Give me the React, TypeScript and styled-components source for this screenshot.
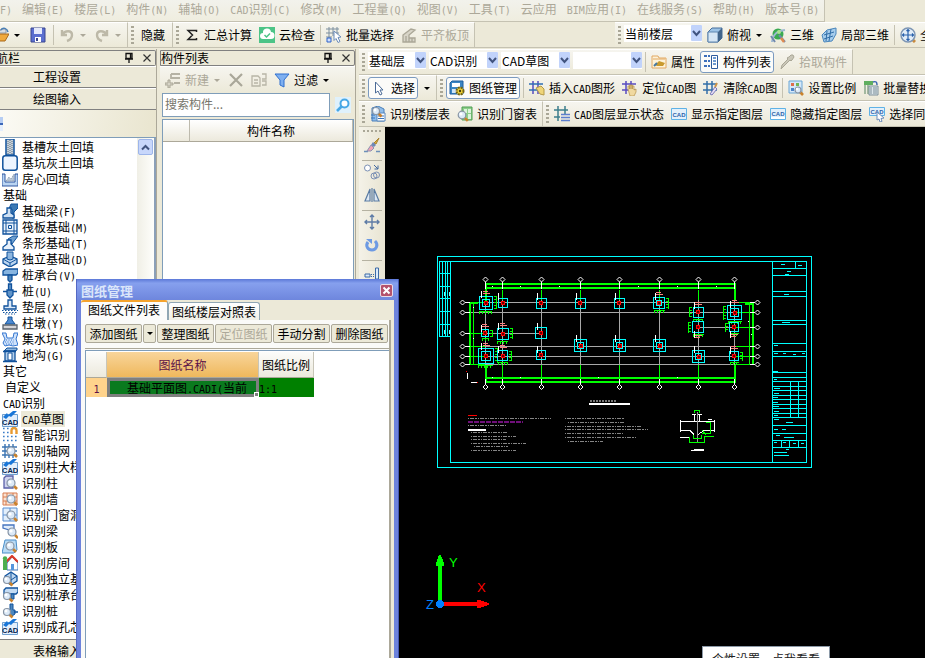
import React from "react";
import styled, { createGlobalStyle, css } from "styled-components";

const Global = createGlobalStyle`
  * { box-sizing: border-box; }
  body { margin: 0; background: #ece9d8; overflow: hidden; }
  body, button, input, select, table {
    font-family: "Noto Sans CJK SC", sans-serif;
    font-size: 12px;
    line-height: 16px;
    color: #000;
  }
  button { border: 0; background: none; padding: 0; margin: 0; white-space: nowrap; }
`;

/* ---------- text with half-width latin runs ---------- */
const Latin = styled.span`
  font-family: "DejaVu Sans Mono", monospace;
  font-size: 10px;
  line-height: 12px;
  white-space: pre;
`;
const Txt = ({ children }: { children: string }) => (
  <span>
    {children.split(/([\x20-\x7e]+)/).map((s, i) => (i % 2 ? <Latin key={i}>{s}</Latin> : s))}
  </span>
);

/* ---------- icons ---------- */
const B = "#10529c";
const L = "#b9d4f2";
const Lens = ({ x = 9, y = 8, r = 4 }) => (
  <>
    <path d={`M${x + r - 1} ${y + r - 1}l3 3`} stroke="#c9822c" strokeWidth="2.6" />
    <circle cx={x} cy={y} r={r} fill="#dceaf8" stroke="#8794a4" strokeWidth="1.2" />
    <circle cx={x - 1} cy={y - 1} r={r / 2.5} fill="#fff" />
  </>
);
const CadMark = (
  <>
    <path d="M.5 3.500h15v12H.5z" fill="#e4effb" stroke="#6f9fd0" />
    <path d="M1 6l4-4 1 2 5-4h4l-6 6-2-1-3 3z" fill="#1976d8" />
    <text x="0" y="14" fontSize="7.500" fontWeight="bold" fontFamily="Liberation Sans" fill="#08264f">CAD</text>
  </>
);
const Hash = ({ c = "#2f6fb4", c2 = c }) => (
  <>
    <path d="M4 1v13M9 1v13" stroke={c} strokeWidth="1.5" />
    <path d="M0 4h14M0 10h14" stroke={c2} strokeWidth="1.5" />
  </>
);
const CadBox = ({ y = 11 }) => (
  <>
    <path d="M.5 2.5h15v11H.5z" fill="#e3f0fb" stroke="#5fb2e6" />
    <text x="1.5" y={y} fontSize="6" fontWeight="bold" fontFamily="Liberation Sans" fill="#2c62a8">CAD</text>
  </>
);
const icons: Record<string, React.ReactNode> = {
  open: <><path d="M1 4h6l1-2h5v4H1z" fill="#d8dde2" stroke="#8c98a6" /><path d="M0 14l4-7h12l-4 7z" fill="#f0a93c" stroke="#a8691a" /><path d="M8 3c2-3 6-2 7 2" fill="none" stroke="#4b7fb5" strokeWidth="1.500" /></>,
  save: <><path d="M1 1h14v14H1z" fill="#5b6fd0" stroke="#3a478f" /><path d="M4 1h8v6H4z" fill="#e4e9fb" /><path d="M5 10h6v5H5z" fill="#fff" /><path d="M6 11h2v3H6z" fill="#3a478f" /></>,
  undo: <><path d="M3 3v5h5M3 8c3-5 10-5 10 0 0 3-2 5-5 6" fill="none" stroke="#bdb9a8" strokeWidth="2.4" /></>,
  redo: <><path d="M13 3v5H8M13 8C10 3 3 3 3 8c0 3 2 5 5 6" fill="none" stroke="#bdb9a8" strokeWidth="2.4" /></>,
  sigma: <path d="M12.500 5V3.500H4L8.500 8 4 12.500h8.500V11" fill="none" stroke="#222" strokeWidth="1.5" />,
  cloud: <><path d="M0 0h16v16H0z" fill="#4cc487" /><path d="M4 12a3 3 0 010-6 4 4 0 018-1 3.500 3.500 0 010 7z" fill="#fff" /><path d="M5.500 8l2 2 3.500-3.500" fill="none" stroke="#4cc487" strokeWidth="1.500" /></>,
  batch: <><path d="M0 2h13M0 6h13M0 10h6M3 0v12M7 0v9M11 0v9" stroke="#7d8f9f" /><path d="M1 11h4v4H1z" fill="#cfe0ff" stroke="#2e62c8" /><path d="M8 4l7 6-3 .5 2 4-2 1-2-4-2 2z" fill="#fff" stroke="#6b8cba" /></>,
  flush: <path d="M2 8l8-6 4 1-6 5v3h6v4H2zM5 9v6M8 9v6M11 11v4" fill="#d8d5c8" stroke="#aaa797" strokeWidth="1.300" />,
  cube: <><path d="M1 5l4-4h10v10l-4 4H1z" fill="#9cc3e6" stroke="#476f9c" /><path d="M1 5h10v10H1z" fill="#d6e6f4" stroke="#5e86b0" /><path d="M11 5l4-4v10l-4 4z" fill="#42658a" /></>,
  orbit: <><circle cx="8" cy="7" r="5.500" fill="#3aaa52" /><path d="M2 15c1-8 5-11 13-12" fill="none" stroke="#9db7d3" strokeWidth="2" /><path d="M1 9l4 6M9 8l6 7" stroke="#7089ad" strokeWidth="2" /><circle cx="9" cy="5" r="2" fill="#a9e38f" /><path d="M11 11l3 4" stroke="#df8a50" strokeWidth="2.500" /></>,
  local3d: <><path d="M1 8l5-5 9-2v6l-4 7-8 1z" fill="#a7cdec" stroke="#4a86bc" /><path d="M3 8l10-3M3 12l9-3M6 4l-1 10M10 2l-2 12" stroke="#326fa8" /></>,
  pan: <><path d="M12 12l3 3" stroke="#c98a3d" strokeWidth="3" /><circle cx="8" cy="8" r="7" fill="#e2edf8" stroke="#7e96b4" strokeWidth="1.500" /><path d="M8 2.500v11M2.500 8h11M6.500 4L8 2.500 9.500 4M6.500 12L8 13.500 9.500 12M4 6.500L2.500 8 4 9.500M12 6.500L13.500 8 12 9.500" fill="none" stroke="#2a62ac" strokeWidth="1.200" /></>,
  props: <><path d="M1 2h6l1 2h7v10H1z" fill="#fdf2d8" stroke="#e2a862" /><path d="M2 5h12" stroke="#e2a862" /><path d="M4 11l4-4 6 2-2 3H6z" fill="#c99a2e" /><path d="M3 12l3-3" stroke="#47789f" strokeWidth="2" /></>,
  complist: <><path d="M1 2h3M1 7h3M1 12h3M5 2h2M5 7h2M5 12h2" stroke="#3d6fbb" strokeWidth="2" /><path d="M8.500 1.500h6v13h-6z" fill="#fff" stroke="#2d5a9c" /><path d="M10 4h3M10 7h3M10 10h3" stroke="#3f79c0" strokeWidth="1.500" /></>,
  picker: <path d="M2 15l1-4 6-6-1-1 2-1 2-2 2 0 1 2-2 3-1 1-1-1-6 6z" fill="#c9c6b8" stroke="#aaa797" />,
  cursor: <path d="M4.500 2v11l2.500-2 2 4 2-1-2-4h3z" fill="#fff" stroke="#4a6a96" />,
  manage: <><path d="M1 3l2-2h11v13H1z" fill="#3b86c4" stroke="#1e5e9e" /><path d="M3 3h8v4H3z" fill="#fff" /><path d="M3 9h5v4H3z" fill="#cfe5f8" /><circle cx="11" cy="11" r="3.500" fill="#f2d53a" stroke="#74620e" strokeWidth="2" strokeDasharray="1.800 1" /><circle cx="11" cy="11" r="1.200" fill="#443c10" /></>,
  insertCad: <><Hash c="#5a4cc0" c2="#2f6fb4" /><path d="M7 8l5-2 3 3v6l-4-1z" fill="#efd579" stroke="#b49a49" /></>,
  locateCad: <><Hash c="#5a4cc0" /><path d="M6 9V6h1.500v3V5H9v4V5h1.500v4V6H12v4l2-1v3l-2 4H8z" fill="#f0d9a0" stroke="#bb9a55" strokeWidth=".8" /></>,
  clearCad: <><Hash c="#336fa8" /><path d="M7 14l5-7 2 2-5 6z" fill="#e7dff5" stroke="#7a79b9" /><path d="M12 7l2-4" stroke="#cc9348" strokeWidth="2" /></>,
  ratio: <><path d="M1 1h13v12H1z" fill="#d5e8f8" stroke="#6aa6d6" /><path d="M3 3h3v3H3z" fill="#e06d4c" /><path d="M8 3h3v3H8z" fill="#74b655" /><path d="M3 8h3v3H3z" fill="#4d83c8" /><Lens x={10} y={10} r={3} /></>,
  replace: <><path d="M1 1h9v4H1z" fill="#5fae5f" /><path d="M2 5v9M5 5v9" stroke="#8aa78a" strokeWidth="1.500" /><path d="M6 6h9v9H6z" fill="#dce6ea" stroke="#7d8f99" /><path d="M8 7v7M11 7v7M13 7v7" stroke="#7d8f99" /><path d="M10 2c3-1 4 0 4 3" fill="none" stroke="#3a66b0" strokeWidth="1.500" /></>,
  floorTable: <><path d="M2 2l6-2 6 3v12H2z" fill="#8fbdeb" stroke="#4a7fb8" /><path d="M7 7h8v8H7z" fill="#fff" stroke="#5686bd" /><path d="M8 10h6M8 12.500h6M1 9h4M1 12h4" stroke="#3a75bb" /><Lens x={6} y={5} r={3.500} /></>,
  doorTable: <><path d="M5 1h10v13H5z" fill="#8ccf8a" stroke="#4f9d53" /><path d="M7 3h3v4H7zM11 3h3v4h-3zM11 8h3v5h-3z" fill="#ddf3dc" /><Lens x={5} y={9} r={3.800} /></>,
  layerState: <><path d="M4 0v15M11 0v8M0 4h14M0 11h6" stroke="#3c7e8c" strokeWidth="1.500" /><path d="M7 8.500h9M7 11.500h9M7 14.500h9" stroke="#5d7fcf" strokeWidth="1.500" /></>,
  cadShow: <CadBox />,
  cadHide: <><CadBox y={10} /><path d="M1 11h14v2H1z" fill="#fff" /></>,
  cadPick: <><path d="M.5 1.500h15v8H.5z" fill="#e3f0fb" stroke="#5fb2e6" /><text x="1.500" y="8" fontSize="6" fontWeight="bold" fontFamily="Liberation Sans" fill="#2c62a8">CAD</text><path d="M8 6l7 6-3 .5 1 3-2 .5-1-3-2 1z" fill="#fff" stroke="#6d8cba" /></>,
  newItem: <><path d="M6 2h9M6 6h9M9 11h6M6 2v5" stroke="#b5b2a4" strokeWidth="1.800" fill="none" /><path d="M3 8h2v3h3v2H5v3H3v-3H0v-2h3z" fill="#d6d3c6" stroke="#aaa797" /></>,
  del: <path d="M2 2l12 12M14 2L2 14" stroke="#a9a799" strokeWidth="2.200" />,
  copy: <path d="M1 4h6l2 2v8H1zM3 8h4M3 11h4M11 2h4v5h-4M11 9h4v4h-4" fill="none" stroke="#b8b5a7" strokeWidth="1.300" />,
  filter: <path d="M1 2h14L10 8v7l-4-2V8z" fill="#7fb0f0" stroke="#2f6fce" />,
  search: <><path d="M0 0h16v16H0z" fill="#dff1fc" /><circle cx="9.500" cy="6.500" r="4" fill="#fff" stroke="#48a8e6" strokeWidth="2" /><path d="M6.500 9.500L2 14" stroke="#48a8e6" strokeWidth="2.600" /></>,
  pin: <path d="M5 3.500h6v5H5zM9.500 3v6M4 9h8M8 9v4" fill="none" stroke="#111" strokeWidth="1.300" />,
  close: <path d="M4.500 4.500l7 7M11.500 4.500l-7 7" stroke="#333" strokeWidth="1.200" />,
  brush: <><path d="M0 14.500h4M12 14.500h4" stroke="#6c8fb9" strokeWidth="1.500" /><path d="M15 1l-5 5 2 1z" fill="#dfb23d" stroke="#a9822b" /><path d="M9 5l3 3-2 2-3-2z" fill="#6d87b8" /><path d="M7 8l3 3-3 3H3z" fill="#f1a3b5" stroke="#8c92b3" /></>,
  copyShape: <><circle cx="3.500" cy="4" r="3" fill="#fff" stroke="#7b90b4" /><circle cx="10" cy="12" r="3" fill="none" stroke="#7b90b4" /><circle cx="12.500" cy="11" r="3" fill="none" stroke="#7b90b4" /><path d="M10 1l4 4M14 1.500V5h-3.500" fill="none" stroke="#41699f" /></>,
  mirror: <path d="M6 2v12H1zM10 2v12h5zM8 1v14" fill="#dfe9f3" stroke="#5b7ca3" strokeWidth="1.200" />,
  move: <path d="M8 1v14M1 8h14M6 3l2-2 2 2M6 13l2 2 2-2M3 6L1 8l2 2M13 6l2 2-2 2" fill="none" stroke="#5d7ba6" strokeWidth="1.400" />,
  rotate: <><path d="M4 5c-3 4 0 8 4 8s7-5 3-9" fill="none" stroke="#6d9ae3" strokeWidth="3" /><path d="M2 2h6v5z" fill="#6d9ae3" /></>,
  align: <><path d="M1 10h5v3H1z" fill="#dcebfa" stroke="#3c6aa6" /><path d="M11.500 4h3v11h-3z" fill="#dcebfa" stroke="#3c6aa6" /><path d="M7 10.500h4M7 12.500h4" stroke="#3c6aa6" strokeDasharray="1 1" /></>,
  trench: <><path d="M4 0h8v16H4z" fill="#c8d3dc" stroke={B} strokeWidth="1.500" /><path d="M6 2v13M8 1v13M10 2v13" stroke="#5c6d7c" strokeDasharray="1 1" /></>,
  pit: <rect x=".8" y=".8" width="14.400" height="14.400" rx="2.500" fill="#edf5ff" stroke={B} strokeWidth="1.500" />,
  room: <><path d="M0 3h3v8h10V3h3v12H0z" fill={L} stroke="#2f57a0" /><path d="M4 10l3-4 2 2 3-5v7z" fill="#b9c7d6" stroke="#8a9bad" strokeDasharray="1 1" /></>,
  beam: <><path d="M9 1h7v4l-4 4v6h-2V6L6 8z" fill="#3b79b4" stroke={B} /><path d="M5 5h4v5l3 2v3H1v-3l4-2z" fill="#cfe1f4" stroke={B} strokeWidth="1.300" /></>,
  raft: <><path d="M1 1h14v14H1z" fill="#e8f1fb" stroke={B} strokeWidth="1.300" /><path d="M4 1v14M12 1v14M1 4h14M1 12h14M6.500 6.500h3v3h-3z" fill="none" stroke={B} /></>,
  strip: <><path d="M6 4l5-3h5L10 9l-1-1z" fill="#6d9fd0" stroke={B} /><path d="M5 5h4v4l3 3v3H1v-3l4-3z" fill="#e8f1fb" stroke={B} strokeWidth="1.300" /></>,
  isolated: <><path d="M1 8l7-3 7 3v4l-7 4-7-4z" fill="#bcd6f0" stroke={B} strokeWidth="1.300" /><path d="M1 8l7 4 7-4M8 12v3" fill="none" stroke={B} /><path d="M5 1h6v7l-3 1-3-1z" fill="#8db6df" stroke={B} /></>,
  cap: <><path d="M1 4l3-2h12v4l-2 2H1z" fill="#86b4e0" stroke={B} strokeWidth="1.300" /><path d="M6 8h4v5l-2 2-2-2z" fill="#4c86bd" stroke={B} strokeWidth="1.300" /></>,
  pile: <><path d="M6.500 1h3v6h-3zM5 7h6v5l-3 3-3-3z" fill="#5f93c8" stroke={B} strokeWidth="1.300" /><path d="M1 8.500h4M11 8.500h4" stroke={B} strokeWidth="1.500" /></>,
  cushion: <><path d="M6 1h4v6h4v3H2V7h4z" fill="#dbe9f8" stroke={B} strokeWidth="1.300" /><path d="M0 11.500h16M1 13.500h15M3 15h10" stroke={B} strokeDasharray="1.500 1.500" /></>,
  pier: <><path d="M6 2h4v3l3 4H3l3-4z" fill="#4d8ad2" stroke={B} /><path d="M1 10h14v4H1z" fill="#d4d4d8" stroke="#58616c" strokeWidth="1.300" /></>,
  sump: <><path d="M0 2h4l1 5h6l1-5h4l-2 6 2 6-5 1-4-1-4 1-2-3 2-4z" fill="#cfe2fa" stroke="#3476d0" /><path d="M3 11h10M4 13h8M4 9h8" stroke="#3476d0" strokeDasharray="1 1.500" /></>,
  ditch: <><path d="M2 4l3-3h10v2l-2 1z" fill="#8db6df" stroke={B} /><path d="M3 4h10v10H3z" fill="#b5d0ec" stroke={B} strokeWidth="1.300" /><path d="M6 6h4v7H6z" fill="#fff" stroke={B} /><path d="M1 14.500h14M1 4.500h13" stroke={B} strokeWidth="1.500" /></>,
  cad: CadMark,
  smart: <><path d="M1 1.500h6M1 5.500h6M1 9.500h14M1 13.500h14" stroke="#3a7cc8" strokeWidth="1.600" strokeDasharray="1.600 2.400" /><path d="M9.500 7V3.500a2.500 2.500 0 015 0V7" fill="none" stroke="#e79a32" strokeWidth="2.400" /></>,
  axis: <><path d="M3 1v14M7 1v14M11 1v14M0 4h15M0 8h15M0 12h15" stroke="#3b74b2" strokeWidth="1.400" /><Lens /></>,
  column: <><path d="M2 3l2-2h7v12H2z" fill="#cfd2ee" stroke="#5960a8" strokeWidth="1.300" /><Lens /></>,
  wall: <><path d="M1 2h14v12H1zM1 6h14M1 10h14M5 2v4M11 2v4M8 6v4M4 10v4" fill="#fbe3d2" stroke="#d77d50" /><Lens /></>,
  door: <><path d="M1 1h14v13H1zM8 1v13M1 8h14" fill="#e2effc" stroke="#5b8fd2" /><Lens /></>,
  recBeam: <><path d="M1 2h11v7l-5 2v-4L1 5z" fill="#e1edfb" stroke="#4675c0" strokeWidth="1.300" /><Lens x={10} y={9} /></>,
  slab: <><path d="M3 1h11l1 10-3 3H0z" fill="#b8dbf6" stroke="#4a8dc8" /><Lens x={8} y={7} /></>,
  house: <><path d="M5 8l5-6 6 6v7H5z" fill="#fff" stroke="#3f74b6" /><path d="M3 8l7-7 6 6" fill="none" stroke="#d83a28" strokeWidth="2.200" /><path d="M1 5h4v10H1z" fill="#4cae4f" /><circle cx="3" cy="3.500" r="2.200" fill="#4cae4f" /><path d="M9 9h3v6H9z" fill="#5596dd" /></>,
  recIso: <><path d="M3 5l6-4 6 4v5l-6 4-6-4z" fill="#bcd6f0" stroke={B} strokeWidth="1.300" /><path d="M9 1v8l6-4M9 9v5" fill="none" stroke={B} /><Lens x={5} y={9} r={3.500} /></>,
  recCap: <><path d="M2 3l2-2h12v4l-2 2H2z" fill="#c4dcf4" stroke={B} strokeWidth="1.300" /><path d="M9 7h3v5H9z" fill="#4c86bd" stroke={B} /><Lens x={5} y={9} r={3.500} /></>,
  recPile: <><path d="M8 1h3v6h2v4l-3 2-3-2V7h1z" fill="#4c86bd" stroke={B} /><path d="M12 9h4" stroke={B} strokeWidth="1.500" /><Lens x={5} y={9} r={3.500} /></>,
};
const Svg = styled.svg`
  width: 16px;
  height: 16px;
  flex: none;
  display: block;
`;
const Icon = ({ name }: { name: string }) => (
  <Svg viewBox="0 0 16 16" fill="none" aria-hidden="true">{icons[name]}</Svg>
);
const Caret = styled.i<{ $dim?: boolean }>`
  flex: none;
  margin: 0 1px;
  border: 3px solid transparent;
  border-top-color: ${(p) => (p.$dim ? "#aca899" : "#000")};
  border-bottom-width: 0;
`;

/* ---------- toolbars ---------- */
const Page = styled.div`
  display: flex;
  flex-direction: column;
  height: 100vh;
  overflow: hidden;
`;
const MenuBar = styled.nav`
  display: flex;
  align-self: flex-start;
  height: 22px;
  padding: 0 0 4px;
  background: linear-gradient(#f2f2ec, #efeddf);
  border-right: 1px solid #c5c2b2;
  border-bottom: 1px solid #c5c2b2;
`;
const MenuItem = styled.button`
  color: #aca899;
  padding: 0 5px;
  &:first-child { padding-left: 0; }
`;
const Strip = styled.div`
  display: flex;
  flex: none;
  height: 26px;
  overflow: hidden;
  border-bottom: 1px solid #c5c2b2;
`;
const Band = styled.div<{ $open?: boolean }>`
  display: flex;
  align-items: center;
  gap: 1px;
  flex: none;
  padding-right: 2px;
  background: linear-gradient(#f6f5ef, #ece9d8);
  border-top: 1px solid #fff;
  border-right: ${(p) => (p.$open ? 0 : 1)}px solid #c5c2b2;
`;
/* runs past the left edge of the window */
const FileBand = styled(Band)`
  margin-left: -10px;
`;
/* runs past the right edge of the window */
const ViewBand = styled(Band)`
  margin-right: -24px;
`;
const ListTools = styled(Band)`
  height: 27px;
  padding-left: 2px;
`;
const Spacer = styled.div`flex: 1;`;
const Grip = styled.span`
  width: 3px;
  height: 19px;
  margin: 0 1px 0 3px;
  flex: none;
  background: repeating-linear-gradient(#aaa797 0 2px, transparent 2px 4px);
`;
const Rule = styled.span`
  width: 1px;
  height: 20px;
  margin: 0 1px;
  flex: none;
  background: #c5c2b2;
`;
const ToolButton = styled.button<{ $on?: boolean; $wide?: boolean }>`
  display: flex;
  align-items: center;
  gap: 4px;
  height: 22px;
  flex: none;
  padding: 0 ${(p) => (p.$wide ? 5 : 3)}px;
  &:disabled { color: #aca899; }
  ${(p) => p.$on && css`
    padding: 0 2px;
    background: #fbfbf9;
    border: 1px solid #7b9ac0;
    border-radius: 3px;
    margin: 0 1px;
  `}
`;
const Tool = ({ icon, text, on, off, caret }: { icon?: string; text?: string; on?: boolean; off?: boolean; caret?: boolean }) => (
  <ToolButton $on={on} $wide={!icon || icon === "save"} disabled={off} aria-label={text ?? icon}>
    {icon && <Icon name={icon} />}
    {text && <Txt>{text}</Txt>}
    {caret && <Caret $dim={off} />}
  </ToolButton>
);
const Combo = styled.select<{ $w: number }>`
  appearance: none;
  width: ${(p) => p.$w}px;
  height: 17px;
  margin: 0 1px 4px;
  padding: 0 12px 0 1px;
  border: 0;
  border-radius: 0;
  line-height: 15px;
  outline: none;
  background:
    url("data:image/svg+xml,%3Csvg xmlns='http://www.w3.org/2000/svg' width='11' height='16'%3E%3Crect width='11' height='16' rx='1' fill='%23c1d3fb'/%3E%3Cpath d='M2 6l3.500 4L9 6' fill='none' stroke='%2341547f' stroke-width='2'/%3E%3C/svg%3E")
    right center no-repeat #fff;
`;
const ToolRows = styled.div`
  display: flex;
  flex-direction: column;
  flex: none;
`;

/* ---------- panes ---------- */
const Main = styled.div`
  display: flex;
  flex: 1;
  min-height: 0;
  padding-top: 1px;
  gap: 3px;
`;
const Pane = styled.section<{ $w: number }>`
  display: flex;
  flex-direction: column;
  flex: none;
  width: ${(p) => p.$w}px;
  padding-top: 1px;
  border-right: 1px solid #aca899;
`;
const PaneHead = styled.header<{ $cut?: boolean }>`
  display: flex;
  align-items: center;
  flex: none;
  height: 16px;
  border: 1px solid #808080;
  border-left: ${(p) => (p.$cut ? 0 : 1)}px solid #808080;
  border-radius: 0 2px 2px 0;
  text-indent: ${(p) => (p.$cut ? -4 : 0)}px;
  overflow: hidden;
  gap: 2px;
  h2 { flex: 1; margin: 0; font-size: 12px; font-weight: 400; line-height: 14px; }
`;
const NavButton = styled.button`
  height: 22px;
  flex: none;
  padding-left: 33px;
  text-align: left;
  border-top: 1px solid #fff;
  border-bottom: 1px solid #808080;
`;
const NavFoot = styled(NavButton)`
  height: 19px;
  padding-top: 3px;
  border-top: 1px solid #808080;
  border-bottom: 0;
`;
const NavTools = styled.div`
  display: flex;
  align-items: center;
  height: 28px;
  flex: none;
  background: linear-gradient(100deg, #fbfaf4, #e9e5cf);
  border-bottom: 1px solid #7f9db9;
`;
const NavMark = styled.span`
  width: 3px;
  height: 14px;
  background: linear-gradient(#b6cdf3 45%, #3a67b8 45% 60%, #e4eefc 60%);
`;
const TreeBox = styled.div`
  display: flex;
  flex: 1;
  min-height: 0;
  background: #fff;
  border-right: 2px solid #8ba0b8;
`;
const Tree = styled.ul`
  flex: 1;
  list-style: none;
  margin: 0;
  padding: 1px 0 0;
  overflow: hidden;
  li { height: 16px; }
`;
const Leaf = styled.button<{ $on?: boolean; $indent: number }>`
  display: flex;
  align-items: center;
  gap: 3px;
  height: 16px;
  padding-left: ${(p) => p.$indent}px;
  > span {
    height: 16px;
    padding: 0 1px;
    background: ${(p) => (p.$on ? "#ece9d8" : "none")};
  }
`;
const ScrollTrack = styled.div`
  width: 17px;
  background: linear-gradient(90deg, #f0efe6, #fefefb);
`;
const ScrollUp = styled.button`
  display: grid;
  place-items: center;
  width: 15px;
  height: 16px;
  margin: 1px;
  border: 1px solid #9db5ea;
  border-radius: 2px;
  background: #c8d7fb;
`;
const SearchRow = styled.div`
  display: flex;
  align-items: center;
  gap: 5px;
  flex: none;
  height: 24px;
  padding: 0 4px 0 2px;
`;
const SearchBox = styled.input`
  flex: 1;
  min-width: 0;
  height: 24px;
  padding: 0 2px 4px;
  border: 1px solid #7f9db9;
  background: #fff;
  &::placeholder { color: #77756b; opacity: 1; }
`;
const ListBox = styled.div`
  flex: 1;
  margin: 2px 1px 0 2px;
  background: #fff;
  border: 1px solid #7f9db9;
`;
const Grid = styled.table`
  border-collapse: separate;
  border-spacing: 0;
  table-layout: fixed;
`;
const CompGrid = styled(Grid)`
  width: 100%;
  th {
    height: 22px;
    padding: 0;
    font-weight: 400;
    background: linear-gradient(#fff, #ece9dc);
    border-right: 1px solid #bdbaad;
    border-bottom: 1px solid #aca899;
  }
  th:first-child { width: 27px; }
`;
const Right = styled.main`
  display: flex;
  flex-direction: column;
  flex: 1;
  min-width: 0;
`;
const Work = styled.div`
  display: flex;
  flex: 1;
  min-height: 0;
`;
const SideTools = styled.div`
  display: flex;
  flex-direction: column;
  align-items: center;
  width: 26px;
  flex: none;
  padding-top: 3px;
  background: linear-gradient(90deg, #f4f2e8, #e8e4d2);
  button { margin-bottom: 7px; }
`;
const SideGrip = styled.span`
  width: 18px;
  height: 2px;
  margin-bottom: 5px;
  background: repeating-linear-gradient(90deg, #aaa797 0 2px, transparent 2px 4px);
`;
const SideRule = styled.span`
  width: 20px;
  height: 1px;
  margin-bottom: 3px;
  background: #b5b2a2;
`;
const Canvas = styled.div`
  position: relative;
  flex: 1;
  min-width: 0;
  background: #000;
  overflow: hidden;
`;
const Drawing = styled.svg`
  display: block;
  width: 100%;
  height: 100%;
`;
const Tip = styled.div`
  position: absolute;
  right: 95px;
  bottom: 0;
  height: 12px;
  padding: 4px 9px 0;
  overflow: hidden;
  background: #fff;
  border: 1px solid #8d9aa8;
  border-bottom: 0;
  color: #222;
`;

/* ---------- drawing manager window ---------- */
const Dialog = styled.section`
  position: absolute;
  left: 76px;
  top: 279px;
  bottom: 0;
  width: 323px;
  display: flex;
  flex-direction: column;
  padding: 0 4px;
  background: #6d83dc;
  border-left: 1px solid #5468c4;
  border-right: 1px solid #4356b0;
`;
const DialogTitle = styled.header`
  display: flex;
  align-items: center;
  justify-content: space-between;
  height: 21px;
  flex: none;
  margin: 0 -4px;
  padding: 2px 5px 0 4px;
  background: linear-gradient(#5c78d8, #86a0ee 20%, #6e86dd);
  h1 { margin: 0; font-size: 13px; line-height: 18px; color: #dbe6fa; }
`;
const CloseButton = styled.button`
  display: grid;
  place-items: center;
  width: 13px;
  height: 13px;
  background: #b4526c;
  border: 1px solid #e8dbe8;
  border-radius: 2px;
`;
const DialogBody = styled.div`
  display: flex;
  flex-direction: column;
  flex: 1;
  min-height: 0;
  padding-right: 3px;
  background: #ece9d8;
`;
const Tabs = styled.div`
  display: flex;
  align-items: flex-end;
  height: 20px;
  flex: none;
`;
const Tab = styled.button<{ $on?: boolean }>`
  height: ${(p) => (p.$on ? 20 : 18)}px;
  padding: ${(p) => (p.$on ? "0 7px 2px" : "0 3px")};
  background: ${(p) => (p.$on ? "#fcfcfb" : "linear-gradient(#fff, #f0efe6)")};
  border: 1px solid #91a7b4;
  border-bottom: 0;
  border-radius: 3px 3px 0 0;
  ${(p) => p.$on && css`border-left: 0; border-top: 2px solid #f5a32c;`}
`;
const TabPage = styled.div`
  display: flex;
  flex-direction: column;
  flex: 1;
  min-height: 0;
  padding: 4px 0 0 4px;
  background: #fafaf8;
  border-right: 2px solid #aca899;
`;
const ButtonRow = styled.div`
  display: flex;
  gap: 1px;
  height: 25px;
  flex: none;
  margin-bottom: 1px;
  border-bottom: 1px solid #aca899;
`;
const PushButton = styled.button<{ $slim?: boolean }>`
  display: grid;
  place-items: center;
  width: ${(p) => (p.$slim ? 13 : 57)}px;
  height: 19px;
  background: #ece9d8;
  border: 1px solid #aca899;
  border-radius: 2px;
  &:disabled { color: #aca899; }
`;
const SheetBox = styled.div`
  flex: 1;
  padding-top: 1px;
  background: #fff;
  border-left: 1px solid #7f9db9;
  border-top: 1px solid #7f9db9;
`;
const SheetGrid = styled(Grid)`
  width: 228px;
  th, td { padding: 0; font-weight: 400; overflow: hidden; white-space: nowrap; }
  thead th {
    height: 26px;
    background: linear-gradient(#fcfcfa, #ece9dc);
    border-right: 1px solid #c8c5b8;
    border-bottom: 1px solid #aca899;
  }
  thead th:nth-child(2) { background: linear-gradient(#f8d59b, #efb85c); color: #5c1248; }
  tbody th { background: #ffd38c; color: #5c1248; }
  tbody td { background: #008000; }
`;
const NameCell = styled.div`
  position: relative;
  height: 19px;
  padding-left: 8px;
  border: 3px solid #7f7f7f;
  line-height: 13px;
  text-align: center;
  background: #0a7a1e;
`;
const Handle = styled.i`
  position: absolute;
  right: -3px;
  bottom: -3px;
  width: 5px;
  height: 5px;
  background: #7f7f7f;
  border: 1px solid #fff;
`;

/* ---------- data ---------- */
const menus = ["F)", "编辑(E)", "楼层(L)", "构件(N)", "辅轴(O)", "CAD识别(C)", "修改(M)", "工程量(Q)", "视图(V)", "工具(T)", "云应用", "BIM应用(I)", "在线服务(S)", "帮助(H)", "版本号(B)"];
const tree: [string, string?][] = [
  ["基槽灰土回填", "trench"], ["基坑灰土回填", "pit"], ["房心回填", "room"], ["基础"],
  ["基础梁(F)", "beam"], ["筏板基础(M)", "raft"], ["条形基础(T)", "strip"], ["独立基础(D)", "isolated"],
  ["桩承台(V)", "cap"], ["桩(U)", "pile"], ["垫层(X)", "cushion"], ["柱墩(Y)", "pier"],
  ["集水坑(S)", "sump"], ["地沟(G)", "ditch"], ["其它"], ["自定义"], ["CAD识别"],
  ["CAD草图", "cad"], ["智能识别", "smart"], ["识别轴网", "axis"], ["识别柱大样", "cad"],
  ["识别柱", "column"], ["识别墙", "wall"], ["识别门窗洞", "door"], ["识别梁", "recBeam"],
  ["识别板", "slab"], ["识别房间", "house"], ["识别独立基础", "recIso"], ["识别桩承台", "recCap"],
  ["识别桩", "recPile"], ["识别成孔芯模", "cad"],
];

/* ---------- foundation plan ---------- */
const axesX = [485.5, 502.5, 541.5, 580.5, 619.5, 659.5, 698.5, 734.5];
const leftY = [302.5, 312.5, 333.5, 346.5, 356.5, 364.5];
const rightY = [302.5, 312.5, 327.5, 346.5, 356.5, 364.5];
/* x, y, size, nested outline, direction of the callout, dimension ticks */
const footings: [number, number, number, number, number, number][] = [
  [485.5, 302.5, 13, 1, -1, 1], [502.5, 302.5, 9, 0, 0, 0], [541, 303, 10, 0, 0, 0], [580, 303, 10, 0, 0, 0],
  [619, 303, 10, 0, 0, 0], [659, 303, 11, 1, -1, 1], [485, 333, 7, 0, -1, 1], [502.5, 333.5, 11, 0, -1, 1],
  [541, 333, 11, 0, 0, 0], [485.5, 355.5, 15, 1, -1, 1], [502.5, 355.5, 10, 0, -1, 1], [541, 355, 9, 0, 0, 0],
  [580.5, 345.5, 12, 1, 0, 0], [619.5, 345.5, 12, 1, 0, 0], [659.5, 345.5, 12, 1, 0, 0], [698, 312, 10, 0, -1, 2],
  [734.5, 312.5, 14, 1, -1, 2], [698, 327, 11, 0, 1, 2], [734, 327, 9, 0, 1, 2], [698.5, 356.5, 12, 1, 0, 0],
  [734, 356, 9, 0, -1, 1],
];
const stampRows = [268, 275, 291, 296, 320, 324, 343, 351, 356, 372, 377, 381, 386, 390, 395, 399, 404, 408, 413, 417, 425, 433, 440, 447];
const notes: [number, number, number][] = [
  [468, 418, 83], [468, 425, 38], [471, 432, 36], [471, 436, 45], [471, 439, 35], [471, 443, 55], [474, 446, 34], [471, 450, 45],
  [565, 418, 60], [568, 422, 57], [565, 426, 76], [565, 429, 83], [565, 433, 58], [565, 437, 72], [568, 441, 35],
];
const Bubble = ({ x, y }: { x: number; y: number }) => (
  <path d={`M${x - 2.5} ${y}l2.500-2.500 2.500 2.500-2.500 2.500z`} fill="#000" stroke="#fff" shapeRendering="auto" />
);
const Footing = ({ f: [x, y, s, nested, call, ticks] }: { f: (typeof footings)[number] }) => {
  const h = s / 2;
  const side = ticks === 2 ? -1 : 1;
  const ex = x + side * (h + 3);
  return (
    <g fill="none">
      {ticks > 0 && <path d={`M${ex} ${y - h}V${y + h}M${x - h} ${y + h + 3}H${x + h}`} stroke="#0f0" strokeWidth="3" strokeDasharray="1 2" />}
      {ticks > 0 && <path d={`M${ex + side} ${y - h}V${y + h}M${x - h} ${y + h + 2}H${x + h}`} stroke="#0f0" />}
      <rect x={x - h} y={y - h} width={s} height={s} stroke="#0ff" />
      {nested > 0 && <rect x={x - h + 3} y={y - h + 3} width={s - 6} height={s - 6} stroke="#0ff" />}
      <rect x={x - 1.5} y={y - 1.5} width="3" height="3" stroke="#f00" fill="#600" />
      <path d={call > 0 ? `M${x - 4} ${y + 4}v7` : `M${x - 4} ${y - h - 5}v7`} stroke="#fff" />
      {call !== 0 && <path d={`M${x - 3} ${y + call * (h + 3)}h7m-7 ${call * 2}h5`} stroke="#ff8080" />}
    </g>
  );
};
const Plan = () => (
  <Drawing viewBox="385 127 540 531" preserveAspectRatio="xMinYMin meet" shapeRendering="crispEdges" role="img" aria-label="基础平面图">
    <g fill="none" stroke="#0ff">
      <path d="M437.500 256.500h374v211h-374zM450.500 261.500h356v201h-356z" />
      <path d="M450.500 261.500h-11v75h11M442.500 261v75M445.500 261v75M447.500 261v75M439 273.500h11M439 286.500h11M439 298.500h11M439 311.500h11M439 324.500h11" />
      <path d="M772.500 261v201M795.500 261v7M790.500 381v36M798.500 381v36M781.500 440v7M789.500 440v7M798.500 440v7" />
      {stampRows.map((y) => <path key={y} d={`M772 ${y + 0.5}h34`} />)}
      <path d="M781 264.500h4M798 265.500h4M787 271.500h4M785 274.500h4M784 294.500h5M782 322.500h8M774 345.500h4M774 353.500h4M783 353.500h3M793 354.500h3M802 353.500h3M773 371.500h5M774 379.500h3M774 388.500h6M774 393.500h5M773 397.500h5M773 402.500h5M773 406.500h6M774 411.500h5M774 415.500h4M774 419.500h5M786 422.500h7M774 429.500h4M782 429.500h4M776 435.500h4M784 437.500h10M774 442.500h3M783 442.500h3M793 443.500h3M801 443.500h3M786 449.500h3M774 452.500h13M774 455.500h15" />
      <path d="M444.500 292v4M449.500 292v4M444.500 330v4M449.500 330v4" stroke="#6ff" />
    </g>
    <path fill="none" stroke="#a8a8a8" d={axesX.map((x) => `M${x} 290V377`).join("") + [302.5, 312.5, 346.5, 356.5, 364.5].map((y) => `M470 ${y}H750`).join("") + "M470 333.500H541M698 327.500H750"} />
    <g fill="none" stroke="#0f0">
      <path d="M485 284h250M485 288h250M485 378h250M485 382h250M470 302v63M753 302v63M486 283v18M486 365v18M735 283v18M735 365v18" strokeWidth="2" />
      <path d="M473.500 302v63M749.500 302v63M470 302.500h15M470 333.500h15M470 346.500h15M470 356.500h15M470 364.500h15M735 302.500h18M735 312.500h18M735 327.500h18M735 346.500h18M735 356.500h18M735 364.500h18" />
      <path d={axesX.map((x) => `M${x} 290v10M${x} 365v13`).join("")} />
      <path d="M470 302.500h8M745 303.500h8" strokeWidth="2" />
    </g>
    <path fill="none" stroke="#fff" d={axesX.map((x) => `M${x} 282v7M${x} 379v6`).join("") + leftY.map((y) => `M465 ${y}h5`).join("") + rightY.map((y) => `M750 ${y}h5`).join("") + "M492 286.500h1M520 286.500h1M559 286.500h1M638 286.500h1M677 286.500h1M716 286.500h1M492 377.500h1M520 377.500h1M598 377.500h1M677 377.500h1M473 307.500h1M473 338.500h1M751 334.500h1M748 321.500h1"} />
    {axesX.map((x) => <g key={x}><Bubble x={x} y={279.5} /><Bubble x={x} y={387} /></g>)}
    {leftY.map((y) => <Bubble key={y} x={462.5} y={y} />)}
    {rightY.map((y) => <Bubble key={y} x={757.5} y={y} />)}
    {footings.map((f, i) => <Footing key={i} f={f} />)}
    <path d="M467.500 373v6M471 382.500h6" stroke="#fff" />
    <path d="M466 371.500h1M477 382.500h1M468 415.500h9" stroke="#f00" />
    <path d="M589 404h41M468 429.500h18" stroke="#fff" strokeWidth="2" />
    <path d="M590 400.500h27" stroke="#777" strokeWidth="2" strokeDasharray="2 1" />
    <path d="M468 422h55" stroke="#70107a" strokeWidth="2" strokeDasharray="5 1" />
    {notes.map(([x, y, w]) => <path key={`${x}-${y}`} d={`M${x} ${y + 0.5}h${w}`} stroke="#858585" strokeDasharray="1 1 4 1 2 1" />)}
    <g fill="none">
      <path d="M680 421.500h35M680.500 420v12M714.500 420v12M680 430.500h10l4 4M680 437.500h10M714 430.500h-10l-6 4M694.500 414v7M699.500 414v7M692 414.500h4M698 414.500h4M708 419.500h4M691 450.500h13M694 449.500h10" stroke="#fff" />
      <path d="M697.500 412v31" stroke="#999" />
      <path d="M694.500 413v-3h5v3M706 422.500h4v11h-8M689.500 437v5.500h15V437M704 436.500h10M694 438.500h7M693.500 435v4M701.500 435v4M702 430l4 5" stroke="#0f0" />
    </g>
    <path d="M440 602v-38" stroke="#0f0" strokeWidth="4" />
    <path d="M436 566v-3l2-5 1-3h2l1 3 2 5v3z" fill="#0f0" />
    <path d="M441 604h38" stroke="#f00" strokeWidth="4" />
    <path d="M477 600h3l5 2 4 1v2l-4 1-5 2h-3z" fill="#f00" />
    <circle cx="440" cy="604" r="4" fill="#0080ff" />
    <g fontFamily="Liberation Sans" fontSize="13">
      <text x="449" y="567" fill="#0f0">Y</text>
      <text x="477" y="592" fill="#f00">X</text>
      <text x="426" y="609" fill="#0080ff">Z</text>
    </g>
  </Drawing>
);

const Select = ({ w, label, value }: { w: number; label: string; value: string }) => (
  <Combo $w={w} aria-label={label} defaultValue={value}><option>{value}</option></Combo>
);

export default function App() {
  return (
    <Page>
      <Global />
      <MenuBar>{menus.map((m) => <MenuItem key={m}><Txt>{m}</Txt></MenuItem>)}</MenuBar>
      <Strip>
        <FileBand>
          <Tool icon="open" caret />
          <Tool icon="save" /><Rule />
          <Tool icon="undo" off caret /><Tool icon="redo" off caret />
        </FileBand>
        <Band><Grip /><Tool text="隐藏" /></Band>
        <Band>
          <Grip /><Tool icon="sigma" text="汇总计算" /><Tool icon="cloud" text="云检查" /><Rule />
          <Tool icon="batch" text="批量选择" /><Tool icon="flush" text="平齐板顶" off />
        </Band>
        <Spacer />
        <ViewBand $open>
          <Grip /><Select w={78} label="楼层范围" value="当前楼层" />
          <Tool icon="cube" text="俯视" caret /><Tool icon="orbit" text="三维" /><Tool icon="local3d" text="局部三维" /><Rule />
          <Tool icon="pan" text="全屏" />
        </ViewBand>
      </Strip>
      <Main>
        <Pane $w={157}>
          <PaneHead $cut><h2>航栏</h2><Icon name="pin" /><Icon name="close" /></PaneHead>
          <NavButton>工程设置</NavButton>
          <NavButton>绘图输入</NavButton>
          <NavTools><NavMark /></NavTools>
          <TreeBox>
            <Tree>
              {tree.map(([label, icon], i) => (
                <li key={i}>
                  <Leaf $on={label === "CAD草图"} $indent={label === "自定义" ? 4 : 2}>
                    {icon && <Icon name={icon} />}<Txt>{label}</Txt>
                  </Leaf>
                </li>
              ))}
            </Tree>
            <ScrollTrack>
              <ScrollUp aria-label="向上滚动">
                <svg width="9" height="7" viewBox="0 0 9 7"><path d="M1 5.500L4.500 2 8 5.500" fill="none" stroke="#41547f" strokeWidth="2" /></svg>
              </ScrollUp>
            </ScrollTrack>
          </TreeBox>
          <NavFoot>表格输入</NavFoot>
        </Pane>
        <Pane $w={196}>
          <PaneHead><h2>构件列表</h2><Icon name="pin" /><Icon name="close" /></PaneHead>
          <ListTools $open>
            <Tool icon="newItem" text="新建" off caret /><Tool icon="del" off /><Tool icon="copy" off /><Tool icon="filter" text="过滤" caret />
          </ListTools>
          <SearchRow>
            <SearchBox placeholder="搜索构件..." aria-label="搜索构件" />
            <button aria-label="搜索"><Icon name="search" /></button>
          </SearchRow>
          <ListBox>
            <CompGrid><thead><tr><th /><th>构件名称</th></tr></thead></CompGrid>
          </ListBox>
        </Pane>
        <Right>
          <ToolRows>
            <Strip>
              <Band>
                <Grip />
                <Select w={58} label="楼层" value="基础层" /><Select w={69} label="分类" value="CAD识别" />
                <Select w={69} label="类型" value="CAD草图" /><Select w={69} label="构件" value="" />
                <Rule /><Tool icon="props" text="属性" /><Tool icon="complist" text="构件列表" on /><Tool icon="picker" text="拾取构件" off />
              </Band>
            </Strip>
            <Strip>
              <Band><Grip /><Tool icon="cursor" text="选择" on /><ToolButton aria-label="选择方式"><Caret /></ToolButton></Band>
              <Band $open>
                <Grip /><Tool icon="manage" text="图纸管理" on /><Rule />
                <Tool icon="insertCad" text="插入CAD图形" /><Tool icon="locateCad" text="定位CAD图" /><Tool icon="clearCad" text="清除CAD图" /><Rule />
                <Tool icon="ratio" text="设置比例" /><Tool icon="replace" text="批量替换" />
              </Band>
            </Strip>
            <Strip>
              <Band><Grip /><Tool icon="floorTable" text="识别楼层表" /><Tool icon="doorTable" text="识别门窗表" /></Band>
              <Band $open>
                <Grip /><Tool icon="layerState" text="CAD图层显示状态" /><Tool icon="cadShow" text="显示指定图层" />
                <Tool icon="cadHide" text="隐藏指定图层" /><Tool icon="cadPick" text="选择同图层" />
              </Band>
            </Strip>
          </ToolRows>
          <Work>
            <SideTools>
              <SideGrip />
              <button aria-label="格式刷"><Icon name="brush" /></button><SideRule />
              <button aria-label="复制"><Icon name="copyShape" /></button>
              <button aria-label="镜像"><Icon name="mirror" /></button><SideRule />
              <button aria-label="移动"><Icon name="move" /></button>
              <button aria-label="旋转"><Icon name="rotate" /></button><SideRule />
              <button aria-label="对齐"><Icon name="align" /></button>
            </SideTools>
            <Canvas>
              <Plan />
              <Tip>个性设置，点我看看</Tip>
            </Canvas>
          </Work>
        </Right>
      </Main>
      <Dialog role="dialog" aria-label="图纸管理">
        <DialogTitle>
          <h1>图纸管理</h1>
          <CloseButton aria-label="关闭">
            <svg width="9" height="9" viewBox="0 0 9 9"><path d="M1.500 1.500l6 6M7.500 1.500l-6 6" stroke="#fff" strokeWidth="2" /></svg>
          </CloseButton>
        </DialogTitle>
        <DialogBody>
          <Tabs><Tab $on>图纸文件列表</Tab><Tab>图纸楼层对照表</Tab></Tabs>
          <TabPage>
            <ButtonRow>
              <PushButton>添加图纸</PushButton><PushButton $slim aria-label="更多"><Caret /></PushButton>
              <PushButton>整理图纸</PushButton><PushButton disabled>定位图纸</PushButton>
              <PushButton>手动分割</PushButton><PushButton>删除图纸</PushButton>
            </ButtonRow>
            <SheetBox>
              <SheetGrid>
                <colgroup><col width="21" /><col width="152" /><col width="55" /></colgroup>
                <thead><tr><th /><th>图纸名称</th><th>图纸比例</th></tr></thead>
                <tbody><tr>
                  <th scope="row"><Txt>1</Txt></th>
                  <td><NameCell><Txt>基础平面图.CADI(当前</Txt><Handle /></NameCell></td>
                  <td><Txt>1:1</Txt></td>
                </tr></tbody>
              </SheetGrid>
            </SheetBox>
          </TabPage>
        </DialogBody>
      </Dialog>
    </Page>
  );
}
